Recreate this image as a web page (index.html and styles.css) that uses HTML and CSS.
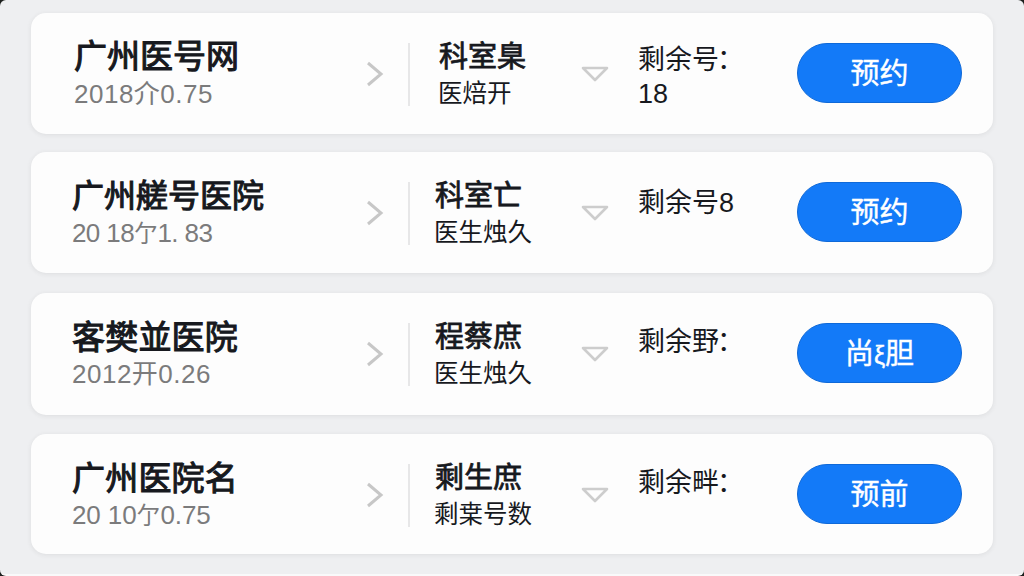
FILE: index.html
```html
<!DOCTYPE html>
<html lang="zh-CN">
<head>
<meta charset="utf-8">
<title>预约</title>
<link rel="stylesheet" href="styles.css">
</head>
<body>
<main class="screen">
  <article class="card first">
    <div class="hospital"><h2>广州医号网</h2><p>2018介0.75</p></div>
    <svg class="chevron" viewBox="0 0 18 26"><path d="M2 2 15 13 2 24"/></svg>
    <i class="divider"></i>
    <div class="dept"><h3>科室臬</h3><p>医焙开</p></div>
    <svg class="triangle" viewBox="0 0 28 16"><path d="M2 2H26L14 14Z"/></svg>
    <div class="left">剩余号<span class="colon">：</span><br>18</div>
    <button class="book">预约</button>
  </article>
  <article class="card second">
    <div class="hospital"><h2>广州艖号医院</h2><p>20 18<span class="unit">亇</span>1. 83</p></div>
    <svg class="chevron" viewBox="0 0 18 26"><path d="M2 2 15 13 2 24"/></svg>
    <i class="divider"></i>
    <div class="dept"><h3>科室亡</h3><p>医生烛久</p></div>
    <svg class="triangle" viewBox="0 0 28 16"><path d="M2 2H26L14 14Z"/></svg>
    <div class="left">剩余号8</div>
    <button class="book">预约</button>
  </article>
  <article class="card third">
    <div class="hospital"><h2>客樊並医院</h2><p>2012开0.26</p></div>
    <svg class="chevron" viewBox="0 0 18 26"><path d="M2 2 15 13 2 24"/></svg>
    <i class="divider"></i>
    <div class="dept"><h3>程蔡庶</h3><p>医生烛久</p></div>
    <svg class="triangle" viewBox="0 0 28 16"><path d="M2 2H26L14 14Z"/></svg>
    <div class="left">剩余野<span class="colon">：</span></div>
    <button class="book">尚<span class="mark">ξ</span>胆</button>
  </article>
  <article class="card fourth">
    <div class="hospital"><h2>广州医院名</h2><p>20 10<span class="unit">亇</span>0.75</p></div>
    <svg class="chevron" viewBox="0 0 18 26"><path d="M2 2 15 13 2 24"/></svg>
    <i class="divider"></i>
    <div class="dept"><h3>剩生庶</h3><p>剩枽号数</p></div>
    <svg class="triangle" viewBox="0 0 28 16"><path d="M2 2H26L14 14Z"/></svg>
    <div class="left">剩余畔<span class="colon">：</span></div>
    <button class="book">预前</button>
  </article>
</main>
</body>
</html>
```
FILE: styles.css
```css
* { box-sizing: border-box; margin: 0; }
html { background: #1c1f1d; }
body {
  height: 576px;
  overflow: hidden;
  font-family: "Liberation Sans", "Noto Sans CJK SC", sans-serif;
  color: #17191e;
}
.screen {
  height: 576px;
  padding: 13px 31px 0;
  display: flex;
  flex-direction: column;
  background: #eeeff1;
  border-radius: 6px;
  border-bottom: 2px solid #f9f9fa;
}
.card {
  flex: none;
  height: 121px;
  margin-bottom: 18px;
  padding-left: 41px;
  display: grid;
  grid-template-columns: 294px 42px 26px 147px 57px 159px 166px;
  align-items: start;
  background: #fdfdfd;
  border-radius: 15px;
  box-shadow: 0 1px 5px rgba(60, 60, 60, .09);
}
.second { margin-bottom: 20px; }
.third { height: 122px; margin-bottom: 19px; }
.fourth { height: 120px; }
.hospital, .dept { white-space: nowrap; padding-top: 25px; }
h2 { font-size: 33px; line-height: 38px; font-weight: 400; -webkit-text-stroke: 1.1px; }
.hospital p {
  font-size: 26px;
  line-height: 36px;
  letter-spacing: .5px;
  color: #7b7b7c;
}
.first .hospital { padding-left: 2px; }
.second h2 { font-size: 32px; }
.third .hospital, .fourth .hospital { padding-top: 26px; }
.third h2, .fourth h2 { line-height: 37px; letter-spacing: .2px; }
.second .hospital p { letter-spacing: -.6px; }
.fourth .hospital p { letter-spacing: -.1px; }
.unit { font-size: 24px; }
.chevron {
  width: 18px;
  height: 26px;
  margin-top: 48px;
  fill: none;
  stroke: #c7c7c7;
  stroke-width: 3;
}
.divider { width: 2px; height: 63px; margin-top: 30px; background: #e7e7e8; }
h3 { padding-left: 1px; font-size: 29px; line-height: 38px; font-weight: 400; -webkit-text-stroke: .8px; }
.dept p { font-size: 24.5px; line-height: 36px; }
.first .dept { padding-left: 4px; }
.third .dept, .fourth .dept { padding-top: 26px; }
.third h3, .fourth h3 { line-height: 37px; }
.triangle {
  width: 28px;
  height: 16px;
  margin-top: 53px;
  fill: none;
  stroke: #cdcdcd;
  stroke-width: 2.6;
  stroke-linejoin: round;
}
.left { padding-top: 30px; font-size: 27px; line-height: 34px; white-space: nowrap; }
.colon { margin-left: -2px; }
.second .left { padding-top: 34px; }
.third .left, .fourth .left { padding-top: 32px; }
.book {
  width: 165px;
  height: 60px;
  margin-top: 30px;
  padding: 0;
  border: 1px solid #0f69d8;
  border-radius: 30px;
  background: #137af8;
  color: #fff;
  font: 400 29px/60px "Liberation Sans", "Noto Sans CJK SC", sans-serif;
  -webkit-text-stroke: .4px;
}
.mark { font-size: 25px; }
```
